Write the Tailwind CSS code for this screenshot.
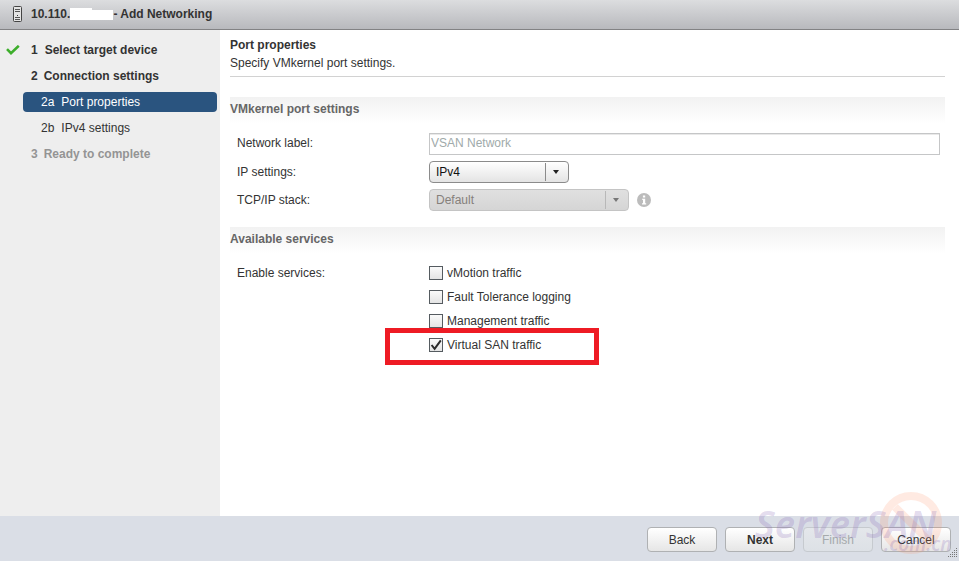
<!DOCTYPE html>
<html lang="en">
<head>
<meta charset="utf-8">
<meta name="viewport" content="width=device-width, initial-scale=1">
<title>Add Networking</title>
<script src="https://cdn.jsdelivr.net/npm/@tailwindcss/browser@4"></script>
</head>
<body class="relative flex min-h-screen flex-col bg-white font-['Liberation_Sans',Arial,sans-serif] text-[12px] leading-4 text-[#333]">

<header class="flex h-[30px] items-center border-b border-[#828284] bg-linear-to-b from-[#dcdddf] to-[#b8b9bd] pb-[2px] pl-3">
  <svg class="h-4 w-[11px]" viewBox="0 0 11 16" fill="none" aria-hidden="true">
    <rect x="1.5" y=".5" width="8" height="15" rx="1" fill="#e4e4e4" stroke="#444"/>
    <path d="M3 3.5h5M3 5.5h5" stroke="#555"/>
    <path d="M5 9.5h1" stroke="#333"/>
    <path d="M3 11.5h5M3 13.5h5" stroke="#555"/>
  </svg>
  <h1 class="ml-2 flex items-center font-bold"><span>10.110.</span><span class="flex h-3 w-[43px] flex-col items-start"><span class="h-[2px] w-[22px] bg-white"></span><span class="w-full flex-1 bg-white"></span></span><span>- Add Networking</span></h1>
</header>

<div class="flex flex-1">
  <nav class="w-[220px] shrink-0 bg-[#eeeeee] pt-[7px]" aria-label="Steps">
    <ol class="flex flex-col pr-[3px]">
      <li class="flex h-[26px] items-center pl-[6px]">
        <svg class="h-[10px] w-[14px]" viewBox="0 0 14 10" fill="none" aria-hidden="true"><path d="M1 4.2 5 8.2 12.8 .8" stroke="#3dae2b" stroke-width="2.6"/></svg>
        <a href="#" class="ml-[11px] flex gap-[7px] font-bold"><span>1</span><span>Select target device</span></a>
      </li>
      <li class="flex h-[26px] items-center pl-[31px]"><a href="#" class="flex gap-[6px] font-bold"><span>2</span><span>Connection settings</span></a></li>
      <li class="flex h-[26px] items-center pl-[23px]"><a href="#" aria-current="step" class="flex h-5 flex-1 items-center gap-[7px] rounded-[4px] bg-[#2a547f] pl-[18px] text-white"><span>2a</span><span>Port properties</span></a></li>
      <li class="flex h-[26px] items-center pl-[41px]"><a href="#" class="flex gap-[7px]"><span>2b</span><span>IPv4 settings</span></a></li>
      <li class="flex h-[26px] items-center gap-[6px] pl-[31px] font-bold text-[#949494]"><span>3</span><span>Ready to complete</span></li>
    </ol>
  </nav>

  <main class="min-w-0 flex-1 pt-[7px] pr-[14px] pl-[10px]">
    <div class="border-b border-[#d2d2d2] pb-[5px]">
      <h2 class="pb-[2px] font-bold">Port properties</h2>
      <p>Specify VMkernel port settings.</p>
    </div>

    <section class="pt-5">
      <h3 class="h-[26px] bg-linear-to-b from-[#f2f2f2] to-white pt-[4px] font-bold text-[#666]">VMkernel port settings</h3>
      <div class="flex flex-col gap-[6px] pt-[10px] pr-[5px] pl-[7px]">
        <div class="flex items-start">
          <label for="label" class="w-48 shrink-0 pt-[2px]">Network label:</label>
          <input id="label" type="text" disabled value="VSAN Network" class="h-[22px] min-w-0 flex-1 border border-[#c5c6c7] bg-white px-[1px] pb-[2px] text-[#a0aaaa] shadow-[inset_0_1px_0_#e9e9e9]">
        </div>
        <div class="flex items-center">
          <label for="ip" class="w-48 shrink-0">IP settings:</label>
          <div class="relative w-[140px]">
            <select id="ip" class="block h-[22px] w-full appearance-none rounded-[4px] border border-[#8b8b8b] bg-linear-to-b from-white to-[#e4e4e4] pr-6 pl-[6px] text-[#111]"><option>IPv4</option><option>IPv6</option></select>
            <svg class="pointer-events-none absolute top-0 right-0 h-[22px] w-6" viewBox="0 0 24 22" aria-hidden="true"><path d="M.5 2v18" stroke="#8b8b8b"/><path d="M8 9h6l-3 4z" fill="#222"/></svg>
          </div>
        </div>
        <div class="flex items-center">
          <label for="stack" class="w-48 shrink-0">TCP/IP stack:</label>
          <div class="relative w-[200px]">
            <select id="stack" disabled class="block h-[22px] w-full appearance-none rounded-[4px] border border-[#c4c4c4] bg-linear-to-b from-[#e0e0e0] to-[#d5d5d5] pr-6 pl-[6px] text-[#85807b] opacity-100"><option>Default</option></select>
            <svg class="pointer-events-none absolute top-0 right-0 h-[22px] w-6" viewBox="0 0 24 22" aria-hidden="true"><path d="M.5 2v18" stroke="#b8b8b8"/><path d="M8 9h6l-3 4z" fill="#777"/></svg>
          </div>
          <svg class="ml-2 h-[14px] w-[14px]" viewBox="0 0 14 14" role="img" aria-label="Information"><circle cx="7" cy="7" r="7" fill="#bcbcbc"/><path d="M5.9 2.6h2.3v2H5.9zM5 5.7h3.2v4.6h1v1.2H5v-1.2h1V6.8H5z" fill="#fff"/></svg>
        </div>
      </div>
    </section>

    <section class="pt-4">
      <h3 class="h-[26px] bg-linear-to-b from-[#f2f2f2] to-white pt-[4px] font-bold text-[#666]">Available services</h3>
      <fieldset class="flex pt-3 pl-[7px]" aria-labelledby="services">
        <span id="services" class="w-48 shrink-0">Enable services:</span>
        <div class="flex flex-col items-start gap-2">
          <label class="flex items-center gap-1"><input type="checkbox" class="h-[14px] w-[14px] appearance-none border border-[#555b60] bg-linear-to-b from-[#fafafa] to-[#e4e4e4]">vMotion traffic</label>
          <label class="flex items-center gap-1"><input type="checkbox" class="h-[14px] w-[14px] appearance-none border border-[#555b60] bg-linear-to-b from-[#fafafa] to-[#e4e4e4]">Fault Tolerance logging</label>
          <label class="flex items-center gap-1"><input type="checkbox" class="h-[14px] w-[14px] appearance-none border border-[#555b60] bg-linear-to-b from-[#fafafa] to-[#e4e4e4]">Management traffic</label>
          <div class="relative">
            <label class="flex items-center gap-1">
              <span class="relative flex"><input type="checkbox" checked class="peer h-[14px] w-[14px] appearance-none border border-[#555b60] bg-linear-to-b from-[#fafafa] to-[#e4e4e4]"><svg class="pointer-events-none absolute inset-0 hidden h-[14px] w-[14px] peer-checked:block" viewBox="0 0 14 14" fill="none" aria-hidden="true"><path d="M2.6 7 5.6 10.8 11.8 2.4" stroke="#2b2b2b" stroke-width="2"/></svg></span>Virtual SAN traffic</label>
            <div class="pointer-events-none absolute -top-[9px] -left-[44px] h-[37px] w-[214px] border-5 border-[#ee1b24]"></div>
          </div>
        </div>
      </fieldset>
    </section>
  </main>
</div>

<footer class="flex h-[45px] items-start justify-end gap-2 bg-[#dadee6] pt-[11px] pr-2">
  <button class="h-[25px] w-[70px] rounded-[4px] border border-[#afb1b3] bg-linear-to-b from-white to-[#e6e6e6]">Back</button>
  <button class="h-[25px] w-[70px] rounded-[4px] border border-[#afb1b3] bg-linear-to-b from-white to-[#e6e6e6] font-bold">Next</button>
  <button disabled class="h-[25px] w-[70px] rounded-[4px] border border-[#c6cacf] bg-linear-to-b from-[#e4e7eb] to-[#dde1e6] text-[#a5aaac]">Finish</button>
  <button class="h-[25px] w-[70px] rounded-[4px] border border-[#afb1b3] bg-linear-to-b from-white to-[#e6e6e6]">Cancel</button>
</footer>

<svg class="pointer-events-none absolute right-0 bottom-0 h-[76px] w-[209px]" viewBox="0 0 209 76" fill="none" aria-hidden="true">
  <g stroke="#ff8a5c" stroke-opacity=".18" stroke-width="8">
    <circle cx="161" cy="38" r="27"/>
    <path d="M145 22 177 54"/>
  </g>
  <g fill="#8466b4" fill-opacity=".24" class="font-['Noto_Sans',sans-serif] font-semibold italic">
    <text x="5" y="53" class="text-[38px]">ServerSAN</text>
    <text x="134" y="66" class="text-[19px]">.com.cn</text>
  </g>
  <g fill="#777">
    <path d="M206 63h1v1h-1zM204 65h1v1h-1zM206 65h1v1h-1zM202 67h1v1h-1zM204 67h1v1h-1zM206 67h1v1h-1zM200 69h1v1h-1zM202 69h1v1h-1zM204 69h1v1h-1zM206 69h1v1h-1zM198 71h1v1h-1zM200 71h1v1h-1zM202 71h1v1h-1zM204 71h1v1h-1zM206 71h1v1h-1z"/>
  </g>
</svg>
</body>
</html>
